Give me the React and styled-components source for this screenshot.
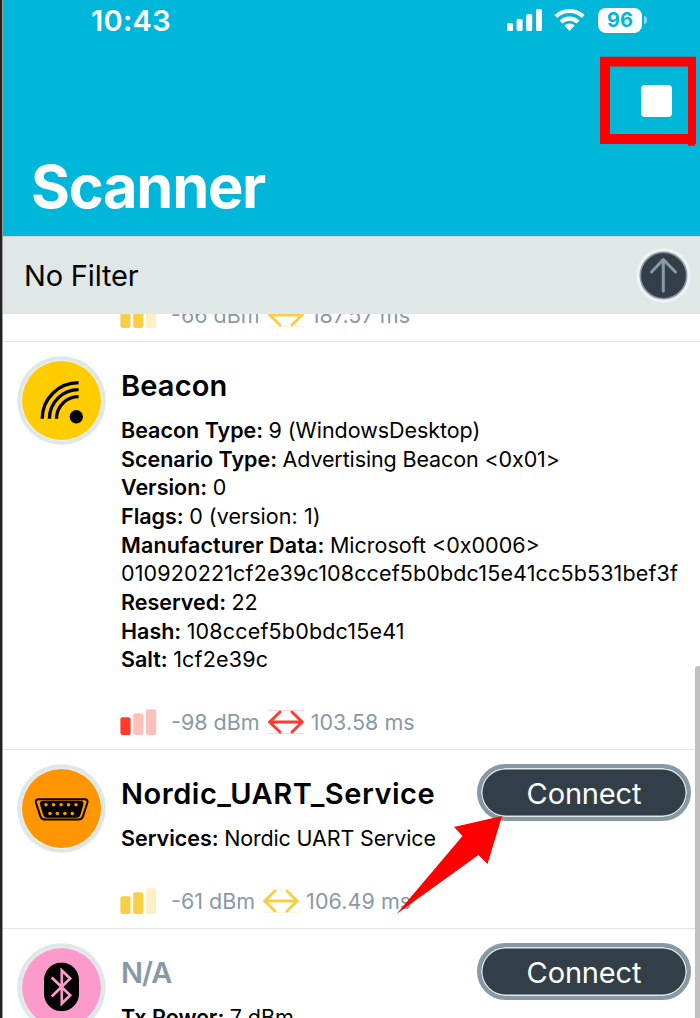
import React from "react";
import styled, { createGlobalStyle } from "styled-components";

const GlobalStyle = createGlobalStyle`
  * { box-sizing: border-box; }
  body { margin: 0; background: #fff; overflow: hidden; }
`;

const Screen = styled.main`
  position: relative;
  display: flex;
  flex-direction: column;
  width: 700px;
  height: 1018px;
  overflow: hidden;
  background: #fff;
  border-left: 2px solid #222224;
  box-shadow: inset 1px 0 0 rgba(60, 60, 60, 0.5);
  font-family: Inter, "Liberation Sans", sans-serif;
  color: #000;
  white-space: nowrap;
`;

const Header = styled.header`
  display: flex;
  flex-direction: column;
  flex: none;
  height: 236px;
  margin-left: 1px;
  background: #00b6d9;
  color: #fff;
`;

const StatusBar = styled.div`
  display: flex;
  align-items: center;
  height: 40px;
  padding: 0 53px 0 88px;
`;

const Clock = styled.time`
  flex: 1;
  padding-top: 2px;
  font-size: 29px;
  font-weight: 600;
  line-height: 40px;
  letter-spacing: 0.3px;
`;

const StatusIcon = styled.svg`
  display: block;
  flex: none;
  margin-left: ${(p) => p.$gap || 0}px;
`;

const Battery = styled.div`
  display: flex;
  align-items: center;
  gap: 2px;
  margin-left: 13px;
`;

const BatteryBody = styled.span`
  width: 44px;
  height: 25px;
  border-radius: 8px;
  background: #fff;
  color: #00b6d9;
  font-size: 20px;
  font-weight: 700;
  line-height: 25px;
  text-align: center;
`;

const BatteryTip = styled.span`
  width: 3px;
  height: 8px;
  border-radius: 0 4px 4px 0;
  background: rgba(255, 255, 255, 0.5);
`;

const NavBar = styled.div`
  display: flex;
  justify-content: flex-end;
  padding: 45px 28px 0 0;
`;

const StopButton = styled.button`
  width: 31px;
  height: 32px;
  padding: 0;
  border: 0;
  border-radius: 4px;
  background: #fff;
`;

const PageTitle = styled.h1`
  margin: 33px 0 0 28px;
  font-size: 59.5px;
  font-weight: 700;
  line-height: 72px;
  letter-spacing: -1.25px;
`;

const FilterBar = styled.div`
  display: flex;
  align-items: center;
  justify-content: space-between;
  flex: none;
  height: 78px;
  margin-left: 1px;
  padding: 0 9px 0 21px;
  border-top: 1px solid #cfd4d5;
  background: #dfe7e7;
`;

const FilterLabel = styled.span`
  font-size: 29px;
  letter-spacing: -0.18px;
`;

const SortButton = styled.button`
  width: 55px;
  height: 55px;
  padding: 0;
  border: 0;
  background: none;
  svg { display: block; }
`;

const DeviceList = styled.section`
  flex: 1;
  min-height: 0;
  overflow: hidden;
`;

const Row = styled.article`
  display: flex;
  align-items: ${(p) => (p.$clipped ? "flex-end" : "flex-start")};
  height: ${(p) => p.$height}px;
  margin-left: 1px;
  padding: ${(p) => (p.$clipped ? "0 9px 12px 14px" : "14px 9px 13px 14px")};
  border-bottom: 1px solid #e2e5e7;
  overflow: hidden;
`;

const Avatar = styled.svg`
  display: block;
  flex: none;
  width: 89px;
  height: 89px;
`;

const AvatarGap = styled.div`
  flex: none;
  width: 89px;
`;

const Content = styled.div`
  flex: 1;
  min-width: 0;
  padding-left: 15px;
`;

const DeviceName = styled.h2`
  margin: 12px 0;
  font-size: 29px;
  font-weight: 600;
  line-height: 36px;
  letter-spacing: ${(p) => p.$track || 0}px;
  color: ${(p) => (p.$muted ? "#8899a6" : "#000")};
`;

const Detail = styled.p`
  margin: 0;
  font-size: 21.5px;
  line-height: 28.65px;
  letter-spacing: ${(p) => p.$track || 0}px;
`;

const DetailLabel = styled.b`
  font-weight: 600;
  letter-spacing: ${(p) => p.$track || 0}px;
`;

const Stats = styled.div`
  display: flex;
  align-items: center;
  height: 28px;
  margin: ${(p) => (p.$tight ? 0 : 34.4)}px 0 0 -1px;
  color: #8899a6;
  font-size: 21.5px;
  svg { flex: none; display: block; }
`;

const Rssi = styled.span`
  margin: 0 8px 0 14px;
`;

const Interval = styled.span`
  margin-left: 7px;
  letter-spacing: 0.06px;
`;

const ConnectButton = styled.button`
  flex: none;
  width: 214px;
  height: 57px;
  padding: 1px 0 0;
  border: 4px solid #8899a6;
  border-radius: 29px;
  background: #333f48;
  box-shadow: inset 0 0 0 1.5px #dfe7e7;
  color: #fff;
  font: 400 29px Inter, "Liberation Sans", sans-serif;
  letter-spacing: -0.15px;
`;

const ScrollThumb = styled.div`
  position: absolute;
  right: 0;
  top: 666px;
  width: 5px;
  height: 360px;
  border-radius: 3px 0 0 0;
  background: #c0c0c0;
`;

const Markup = styled.svg`
  position: absolute;
  top: 0;
  left: -2px;
  pointer-events: none;
`;

function Signal({ color, level }) {
  return (
    <svg width="37" height="28" viewBox="0 0 37 28">
      {[0, 1, 2].map((i) => (
        <rect
          key={i}
          x={0.4 + i * 12.8}
          y={9.2 - i * 4}
          width="10.2"
          height={17.9 + i * 4}
          rx="2"
          fill={color}
          opacity={i < level ? 1 : 0.32}
        />
      ))}
    </svg>
  );
}

function Exchange({ color }) {
  return (
    <svg width="36" height="28" viewBox="0 0 36 28" fill="none" stroke={color}>
      <path d="M0 2.5H36M0 25.5H36" strokeWidth="1" opacity="0.2" />
      <path
        d="M1.6 14H34.2M12 4 1.6 14 12 24M24 4 34.2 14 24 24"
        strokeWidth="3"
        strokeLinecap="round"
        strokeLinejoin="round"
      />
    </svg>
  );
}

function DeviceAvatar({ color, children }) {
  return (
    <Avatar viewBox="0 0 89 89">
      <circle cx="44.5" cy="44.5" r="44.3" fill="#dfe7e7" />
      <circle cx="44.5" cy="44.5" r="40.5" fill="#eef1f5" />
      <circle cx="44.5" cy="44.5" r="39.5" fill={color} />
      {children}
    </Avatar>
  );
}

function StatLine({ color, level, rssi, interval, tight }) {
  return (
    <Stats $tight={tight}>
      <Signal color={color} level={level} />
      <Rssi>{rssi}</Rssi>
      <Exchange color={color} />
      <Interval>{interval}</Interval>
    </Stats>
  );
}

const BEACON_DETAILS = [
  { label: "Beacon Type:", value: "9 (WindowsDesktop)", track: -0.05 },
  { label: "Scenario Type:", value: "Advertising Beacon <0x01>", track: -0.12 },
  { label: "Version:", value: "0" },
  { label: "Flags:", value: "0 (version: 1)", track: 0.05 },
  { label: "Manufacturer Data:", labelTrack: 0.1, value: "Microsoft <0x0006>" },
  { value: "010920221cf2e39c108ccef5b0bdc15e41cc5b531bef3f", track: 0.14 },
  { label: "Reserved:", value: "22" },
  { label: "Hash:", value: "108ccef5b0bdc15e41", track: 0.18 },
  { label: "Salt:", value: "1cf2e39c", track: 0.18 },
];

const YELLOW = "#f7ce46";
const RED = "#ff3b30";

export default function App() {
  return (
    <Screen>
      <GlobalStyle />
      <Header>
        <StatusBar>
          <Clock>10:43</Clock>
          <StatusIcon width="36" height="24" viewBox="0 0 36 24" fill="#fff">
            <rect x="0" y="15" width="6" height="8" rx="1.5" />
            <rect x="9.6" y="11" width="6" height="12" rx="1.5" />
            <rect x="19.2" y="6" width="6" height="17" rx="1.5" />
            <rect x="29" y="1" width="6" height="22" rx="1.5" />
          </StatusIcon>
          <StatusIcon $gap={11} width="31" height="24" viewBox="0 0 31 24">
            <g fill="none" stroke="#fff" strokeWidth="4.2">
              <path d="M1.8 8.6a19.6 19.6 0 0 1 27.4 0" />
              <path d="M7 14a12.2 12.2 0 0 1 17 0" />
            </g>
            <path d="M10.3 17.6a7.6 7.6 0 0 1 10.4 0L15.5 23z" fill="#fff" />
          </StatusIcon>
          <Battery>
            <BatteryBody>96</BatteryBody>
            <BatteryTip />
          </Battery>
        </StatusBar>
        <NavBar>
          <StopButton aria-label="Stop" />
        </NavBar>
        <PageTitle>Scanner</PageTitle>
      </Header>
      <FilterBar>
        <FilterLabel>No Filter</FilterLabel>
        <SortButton aria-label="Scroll to top">
          <svg width="55" height="55" viewBox="0 0 55 55">
            <circle cx="27.5" cy="27.5" r="27.3" fill="#f1f0f6" />
            <circle cx="27.5" cy="27.5" r="23.2" fill="#333f48" stroke="#8899a6" strokeWidth="1.6" />
            <path
              d="M27.3 11.5V43M15.5 24 27.3 11.5 39.5 24"
              fill="none"
              stroke="#8899a6"
              strokeWidth="3"
              strokeLinecap="round"
              strokeLinejoin="round"
            />
          </svg>
        </SortButton>
      </FilterBar>
      <DeviceList>
        <Row $height={28} $clipped>
          <AvatarGap />
          <Content>
            <StatLine tight color={YELLOW} level={2} rssi="-66 dBm" interval="187.57 ms" />
          </Content>
        </Row>
        <Row $height={408}>
          <DeviceAvatar color="#ffcc00">
            <g fill="none" stroke="#000" strokeWidth="3.3">
              <path d="M25.2 62.7A36.4 36 0 0 1 61.6 26.7" />
              <path d="M32.4 62.7A29.2 29 0 0 1 61.6 33.7" />
              <path d="M39.5 62.7A22.1 22 0 0 1 61.6 40.7" />
            </g>
            <circle cx="59.3" cy="60.7" r="6.7" />
          </DeviceAvatar>
          <Content>
            <DeviceName $track={0.15}>Beacon</DeviceName>
            {BEACON_DETAILS.map(({ label, labelTrack, value, track }) => (
              <Detail key={value} $track={track}>
                {label && <DetailLabel $track={labelTrack}>{label} </DetailLabel>}
                {value}
              </Detail>
            ))}
            <StatLine color={RED} level={1} rssi="-98 dBm" interval="103.58 ms" />
          </Content>
        </Row>
        <Row $height={179}>
          <DeviceAvatar color="#ff9500">
            <path
              d="M22 35.2H67.3Q71.4 35.2 70.3 39L66 52.3Q64.9 55.4 61.5 55.4H28Q24.6 55.4 23.4 52.3L19 39Q17.9 35.2 22 35.2Z"
              fill="none"
              stroke="#000"
              strokeWidth="2"
            />
            <path d="M26.5 36.8H63Q67.4 36.8 66.2 41L63.3 51Q62.4 53.8 59 53.8H30.4Q27.2 53.8 26.2 51L23.2 41Q22 36.8 26.5 36.8Z" />
            <g fill="#ff9500">
              {[29, 36.6, 44.1, 51.6, 59].map((x) => (
                <circle key={x} cx={x} cy="40.8" r="1.8" />
              ))}
              {[33, 40.4, 47.9, 55.3].map((x) => (
                <circle key={x} cx={x} cy="49.5" r="1.8" />
              ))}
            </g>
          </DeviceAvatar>
          <Content>
            <DeviceName $track={0.53}>Nordic_UART_Service</DeviceName>
            <Detail $track={-0.15}>
              <DetailLabel>Services: </DetailLabel>Nordic UART Service
            </Detail>
            <StatLine color={YELLOW} level={2} rssi="-61 dBm" interval="106.49 ms" />
          </Content>
          <ConnectButton>Connect</ConnectButton>
        </Row>
        <Row $height={179}>
          <DeviceAvatar color="#fc9bcb">
            <rect x="27" y="19.8" width="35" height="48.2" rx="16.5" ry="17.5" />
            <path
              d="M34.7 34.5 53.2 52.3 44.8 60.5V27.5L53.2 35.5 34.7 53.5"
              fill="none"
              stroke="#fc9bcb"
              strokeWidth="2.7"
            />
          </DeviceAvatar>
          <Content>
            <DeviceName $muted $track={-1}>N/A</DeviceName>
            <Detail>
              <DetailLabel>Tx Power: </DetailLabel>7 dBm
            </Detail>
          </Content>
          <ConnectButton>Connect</ConnectButton>
        </Row>
      </DeviceList>
      <ScrollThumb />
      <Markup width="700" height="1018" viewBox="0 0 700 1018" fill="#ff0000">
        <path fillRule="evenodd" d="M600 56.7H696V144H695V145.7H688V144H600ZM610 66.5V134H688V66.5Z" />
        <path d="M502 816 454 827 462.5 836 396.5 914 478.5 855 487.5 864Z" />
      </Markup>
    </Screen>
  );
}
